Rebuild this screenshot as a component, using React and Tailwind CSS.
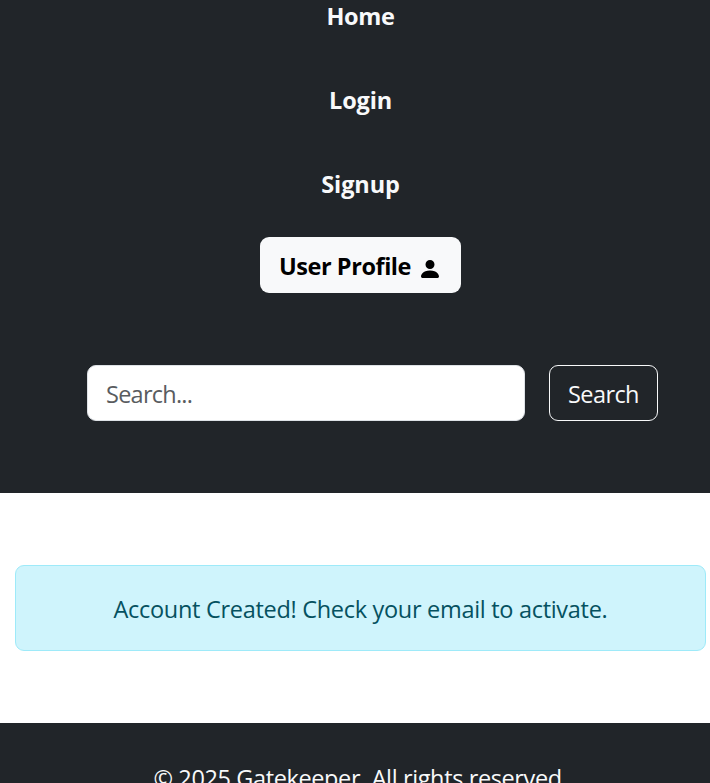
import { BsPersonFill } from "react-icons/bs";

export default function App() {
  return (
    <div className="h-[783px] w-[710px] overflow-hidden bg-white font-['Segoe_UI','Open_Sans','Noto_Sans',sans-serif] text-[23.5px] leading-9">
      <header className="h-[493px] bg-[#212529]">
        <nav className="flex w-[721px] flex-col items-center font-bold text-[#f8f9fa]">
          <a className="-mt-0.5 block h-[84px] tracking-[-0.35px]">Home</a>
          <a className="block h-[84px] tracking-[-0.15px]">Login</a>
          <a className="block h-[71px] tracking-[-0.1px]">Signup</a>
          <button className="flex h-14 w-[201px] items-center rounded-[9px] bg-[#f8f9fa] pl-[19px] pt-px text-black">
            <span className="w-[139px] whitespace-nowrap text-left tracking-[-0.45px]">User Profile</span>
            <BsPersonFill className="mt-[7px] size-6" />
          </button>
        </nav>
        <form className="mt-[72px] flex gap-6 pl-[87px]">
          <input
            className="h-14 w-[438px] rounded-[9px] border border-[#dee2e6] bg-white px-[18px] pt-px tracking-[-0.75px] placeholder:text-[#595c5f]"
            placeholder="Search..."
          />
          <button type="button" className="h-14 w-[109px] rounded-[9px] border border-[#f8f9fa] pt-px tracking-[-0.6px] text-[#f8f9fa]">
            Search
          </button>
        </form>
      </header>
      <main className="h-[230px] pl-[15px] pt-[72px]">
        <div className="flex h-[86px] w-[691px] items-center justify-center rounded-[9px] border border-[#9eeaf9] bg-[#cff4fc] pt-0.5 text-[#055160]">
          <p className="whitespace-nowrap tracking-[-0.3px]">Account Created! Check your email to activate.</p>
        </div>
      </main>
      <footer className="h-[120px] w-[721px] bg-[#212529] pt-[37px] text-center text-[#f8f9fa]">
        <p className="tracking-[-0.38px]">© 2025 Gatekeeper. All rights reserved.</p>
      </footer>
    </div>
  );
}
